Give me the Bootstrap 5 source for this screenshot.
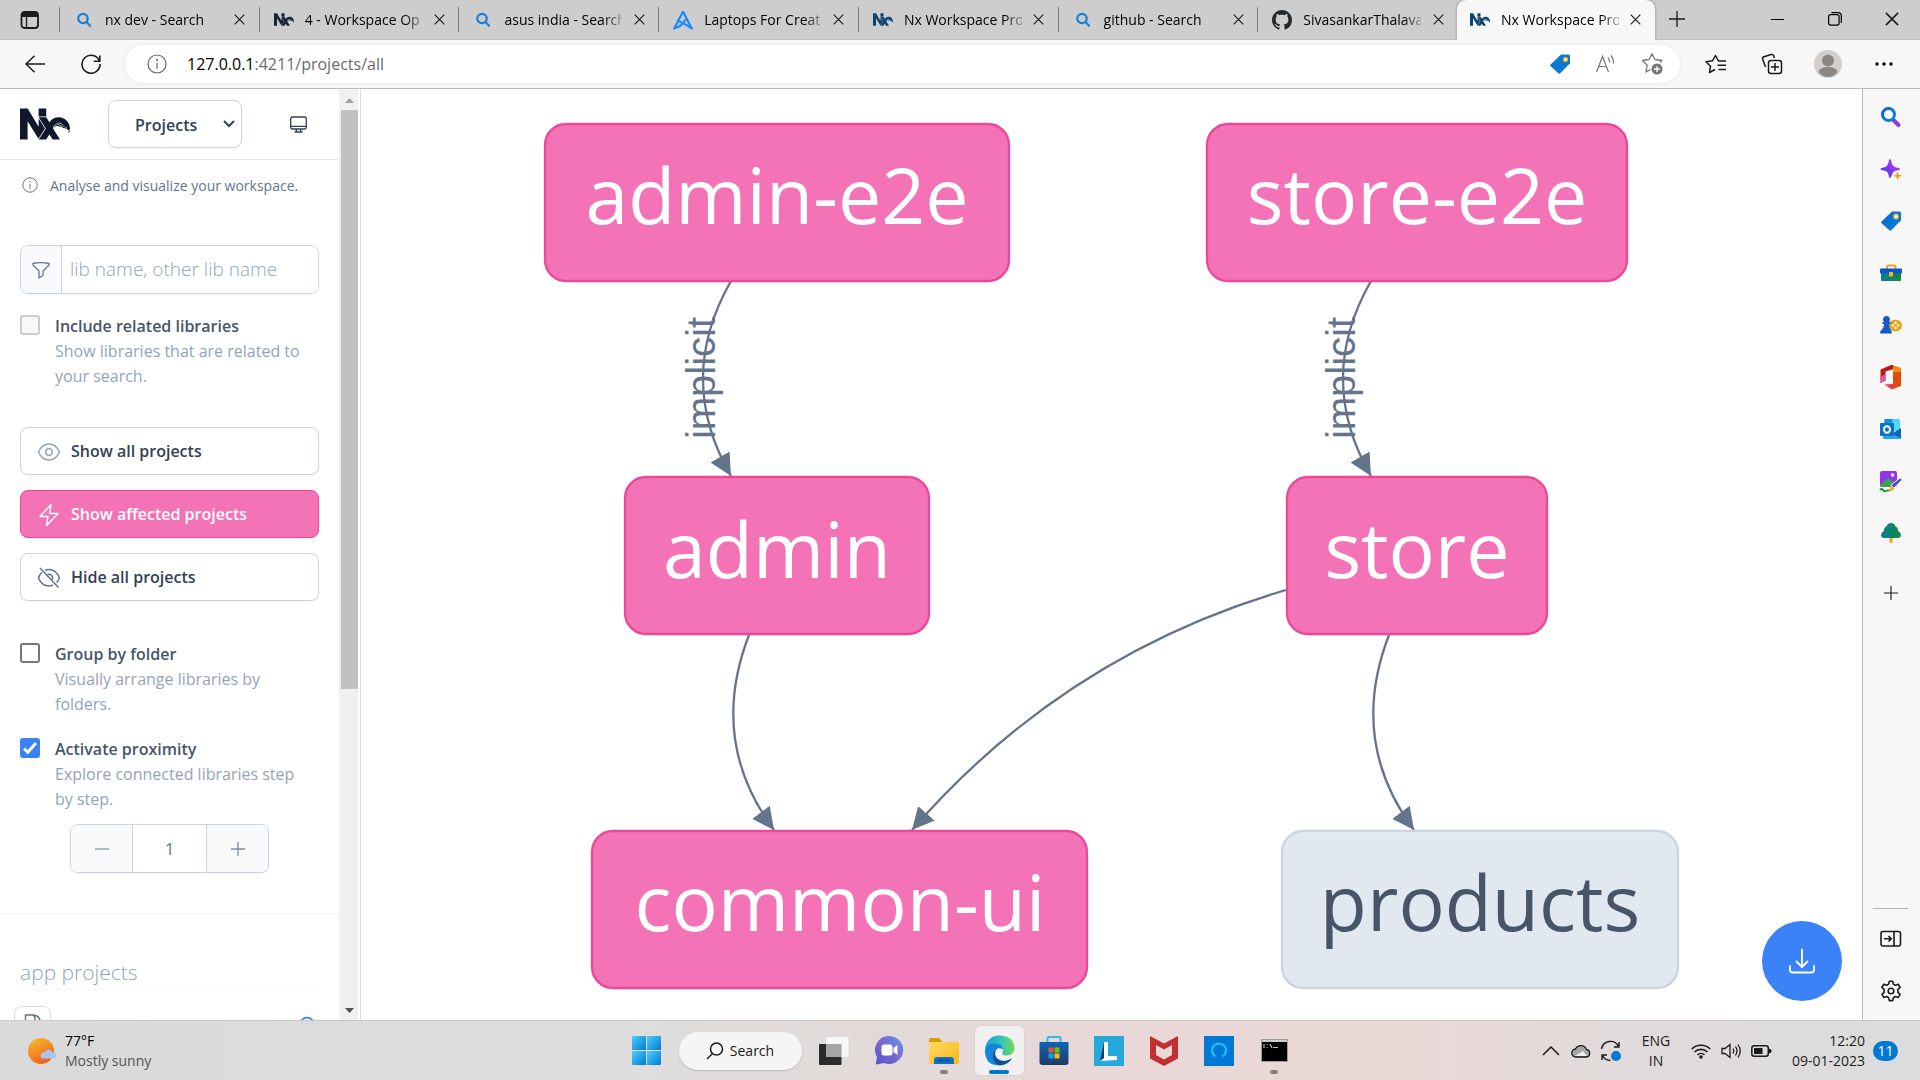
<!DOCTYPE html>
<html lang="en">
<head>
<meta charset="utf-8">
<meta name="viewport" content="width=device-width, initial-scale=1">
<title>Nx Workspace Project Graph</title>
<link href="https://cdn.jsdelivr.net/npm/bootstrap@5.3.0/dist/css/bootstrap.min.css" rel="stylesheet">
<style>
  :root { --slate-300:#cbd5e1; --slate-400:#94a3b8; --slate-500:#64748b; --slate-600:#475569; --slate-700:#334155; }
  body { font-family:"Open Sans","Noto Sans",sans-serif; font-size:16px; line-height:25px; color:var(--slate-600); overflow:hidden; }
  svg { display:block; flex:none; }
  .bare { border:0; background:none; padding:0; display:flex; align-items:center; justify-content:center; color:#1b1b1b; flex:none; }

  /* tab strip */
  .tabstrip { height:40px; background:#cdcdcd; color:#000; font-size:14px; line-height:20px; border-bottom:1px solid #c0c0c0; }
  .tab-tools { width:59px; }
  .tab-strip-list { min-width:0; }
  .tab-item { min-width:0; position:relative; padding:0 8px 0 14px; border-left:1px solid #7d7d7d; height:25px; margin-top:7px; }
  .tab-item.current { background:#f7f7f7; border-left:0; border-radius:9px 9px 0 0; height:40px; margin-top:0; box-shadow:0 0 3px rgba(0,0,0,.35); clip-path:inset(0 -4px 0 -4px); padding-left:13px; padding-bottom:1px; }
  .tab-name { color:#000; text-decoration:none; white-space:nowrap; flex:1; min-width:0; margin-left:11px; -webkit-mask-image:linear-gradient(90deg,#000 100px,transparent 124px); mask-image:linear-gradient(90deg,#000 100px,transparent 124px); }
  .tab-close { width:22px; height:22px; margin-left:6px; }
  .win-tools { width:265px; }
  .win-tools .bare { width:57px; height:38px; }
  .win-tools .bare:first-child { width:44px; margin-right:auto; }

  /* toolbar */
  .toolbar { height:49px; background:#f7f7f7; border-bottom:1px solid #bbb; padding:5px 8px 5px 7px; }
  .toolbar > .bare { width:56px; height:38px; }
  .address { background:#fff; border-radius:19px; height:38px; box-shadow:0 0 4px rgba(0,0,0,.08); margin:0 8px 0 6px; padding:0 5px 0 22px; }
  .address-text { font-size:16px; color:#6b6b6b; margin-left:20px; }
  .address-text b { font-weight:400; color:#000; }
  .address .bare { width:46px; height:38px; color:#767676; }

  /* left panel */
  .panel { width:361px; border-right:1px solid #ddd; background:#fff; }
  .panel-body { min-width:0; overflow:hidden; }
  .panel-head { height:71px; padding:0 20px; border-bottom:1px solid #e2e4e8; }
  .view-select { width:134px; height:48px; margin-left:38px; border:1px solid var(--slate-300); border-radius:8px; padding:2px 36px 0 26px; font-size:16px; font-weight:600; color:var(--slate-700); box-shadow:0 1px 2px rgba(0,0,0,.05);
    background-image:url("data:image/svg+xml,%3Csvg xmlns='http://www.w3.org/2000/svg' viewBox='0 0 12 12' fill='none' stroke='%23334155' stroke-width='2'%3E%3Cpath d='M1 3l5 5 5-5'/%3E%3C/svg%3E"); background-position:right 6px center; background-size:12px; }
  .intro { padding:0 22px; height:50px; font-size:14px; color:var(--slate-500); }
  .section-x { padding:0 20px; }
  .filter { height:49px; margin-top:35px; border:1px solid var(--slate-300); border-radius:8px; overflow:hidden; box-shadow:0 1px 2px rgba(0,0,0,.05); }
  .filter label { width:41px; flex:none; background:#f8fafc; border-right:1px solid var(--slate-300); color:var(--slate-500); }
  .filter input { border:0; padding:0 8px; font-size:19px; font-weight:300; border-radius:0; }
  .filter input::placeholder { color:var(--slate-400); }
  .option { padding-left:35px; min-height:0; margin:0; }
  .option .form-check-input { width:20px; height:20px; margin:1px 0 0 -35px; border:2px solid #767676; border-radius:3px; opacity:1; }
  .option .form-check-input:disabled { border-color:#ccc; background:#f8f8f8; }
  .option .form-check-input:checked { background-color:#3b82f6; border-color:#3b82f6; background-size:20px; background-image:url("data:image/svg+xml,%3Csvg xmlns='http://www.w3.org/2000/svg' viewBox='0 0 20 20' fill='none' stroke='%23fff' stroke-width='3'%3E%3Cpath d='M4 10.500l3.800 3.800L16 5'/%3E%3C/svg%3E"); }
  .option label { font-weight:600; color:var(--slate-600); display:block; opacity:1!important; }
  .option p { margin:0; padding-right:12px; color:var(--slate-400); }
  .opt-first { margin-top:20px; }
  .actions { margin-top:38px; gap:15px; }
  .act { height:48px; text-align:left; border:1px solid var(--slate-300); border-radius:8px; background:#fff; color:var(--slate-700); font-size:16px; font-weight:600; padding:1px 16px 0; display:flex; align-items:center; gap:10px; box-shadow:0 1px 2px rgba(0,0,0,.05); }
  .act svg { color:var(--slate-400); }
  .act.affected { background:#f472b6; border-color:#ec4899; color:#fff; }
  .act.affected svg { color:#fff; }
  .opt-mid { margin-top:41px; }
  .opt-next { margin-top:20px; }
  .stepper { width:199px; height:49px; margin:12px 0 0 50px; border:1px solid var(--slate-300); border-radius:8px; overflow:hidden; box-shadow:0 1px 2px rgba(0,0,0,.05); }
  .stepper button { width:61px; background:#f8fafc; color:var(--slate-400); }
  .stepper input { width:75px; border:solid var(--slate-300); border-width:0 1px; text-align:center; color:var(--slate-500); font-size:17px; padding:0; }
  .project-list { margin-top:40px; border-top:1px solid #f1f5f9; padding-top:44px; }
  .project-list h2 { font-size:21px; font-weight:300; line-height:28px; color:var(--slate-400); padding-bottom:3px; margin-bottom:16px; border-bottom:1px solid #f8fafc; }
  .file-chip { width:37px; height:37px; margin-left:-6px; border:1px solid #d5dce6; border-radius:8px; color:var(--slate-500); box-shadow:0 1px 2px rgba(0,0,0,.05); }
  .rail { width:19px; background:#f0f0f0; padding:8px 0 6px 2px; margin-right:2px; }
  .rail-track { flex:1; margin:6px 0; }
  .rail-thumb { width:17px; height:65%; background:#c1c1c1; }

  /* graph */
  .graph { position:relative; flex:1; min-width:0; background:#fff; overflow:hidden; }
  .graph > svg { width:100%; height:100%; }
  .graph-node { font-family:"Open Sans","Noto Sans",sans-serif; font-size:77px; text-anchor:middle; fill:#fff; }
  .fab { position:absolute; right:20px; bottom:19px; width:80px; height:80px; border-radius:50%; background:#3b82f6; color:#fff; }

  /* browser side bar */
  .edgebar { width:58px; background:#f7f7f7; border-left:1px solid #bbb; padding:2px 2px 3px 0; }
  .edgebar .bare { width:55px; height:52px; }
  .edgebar .bare:nth-child(n+4) { margin-top:0; }
  .edgebar hr { width:35px; margin:auto 0 4px; border-color:#8a8a8a; opacity:.6; }

  /* task bar */
  .taskbar { height:60px; display:grid; grid-template-columns:1fr auto 1fr; color:#1c1c1c; font-size:14px; line-height:20px; border-top:1px solid #c9c9c9;
    background:linear-gradient(90deg,#dadada 0,#dedddd 32%,#e2dad9 46%,#e9d8d7 58%,#ead8d7 74%,#e0dbda 84%,#dcdcdc 100%); }
  .task { width:55px; height:59px; position:relative; }
  .task::before { content:""; position:absolute; inset:5px 3px; border-radius:5px; }
  .task svg { position:relative; }
  .task.active::before { background:#f1efef; box-shadow:0 0 1px #aaa; }
  .task.open::after { content:""; position:absolute; bottom:6px; width:8px; height:4px; border-radius:2px; background:#888180; }
  .task.active::after { width:20px; background:#0078d4; }
  .task-search { width:123px; height:38px; margin:0 5px; border-radius:19px; background:#f5f5f5; box-shadow:0 1px 2px rgba(0,0,0,.15); gap:6px; }
  .weather-note { color:#555; }
  .tray { gap:2px; padding-right:22px; }
  .tray .icon-slot { width:28px; height:40px; display:flex; align-items:center; justify-content:center; }
  .tray-lang { width:58px; text-align:center; }
  .tray-clock { width:88px; text-align:right; }
  .tray-count { width:25px; height:20px; border-radius:10px; background:#0078d4; color:#fff; margin-left:6px; text-align:center; }
</style>
</head>
<body class="vh-100 d-flex flex-column">
<svg width="0" height="0" class="position-absolute" aria-hidden="true">
  <defs>
    <symbol id="nx" viewBox="0 4.4 24 15.2"><path fill="currentColor" d="m11.987 14.138-3.132 4.923-5.193-8.427-.012 8.822H0V4.544h3.691l5.247 8.833.005-3.998 3.044 4.759zm.601-5.761c.024-.048 0-3.784.008-3.833h-3.65c.002.059-.005 3.776-.003 3.833h3.645zm5.634 4.134a2.061 2.061 0 0 0-1.969 1.336 1.963 1.963 0 0 1 2.343-.739c.396.161.917.422 1.33.283a2.1 2.1 0 0 0-1.704-.88zm3.39 1.061c-.375-.13-.8-.277-1.109-.681-.06-.08-.116-.17-.176-.265a2.143 2.143 0 0 0-.533-.642c-.294-.216-.68-.322-1.18-.322a2.482 2.482 0 0 0-2.294 1.536 2.325 2.325 0 0 1 4.002.388.75.75 0 0 0 .836.334c.493-.105.46.36 1.203.518v-.133c-.003-.446-.246-.55-.75-.733zm2.024 1.266a.723.723 0 0 0 .347-.638c-.01-2.957-2.41-5.487-5.37-5.487a5.364 5.364 0 0 0-4.487 2.418c-.01-.026-1.522-2.39-1.538-2.418H8.943l3.463 5.423-3.379 5.32h3.54l1.54-2.366 1.568 2.366h3.541l-3.21-5.052a.7.7 0 0 1-.084-.32 2.69 2.69 0 0 1 2.69-2.691h.001c1.488 0 1.736.89 2.057 1.308.634.826 1.9.464 1.9 1.541a.707.707 0 0 0 1.066.596zm.35.133c-.173.372-.56.338-.755.639-.176.271.114.412.114.412s.337.156.538-.311c.104-.231.14-.488.103-.74z"/></symbol>
    <symbol id="lens" viewBox="0 0 20 20"><g fill="none" stroke="#1a7fd6" stroke-width="2.2" stroke-linecap="round"><circle cx="9" cy="8.500" r="4.700"/><path d="M12.500 12l3.500 3.800"/></g></symbol>
    <symbol id="x" viewBox="0 0 11 11"><path d="M.7.7l9.600 9.600M10.300.7L.7 10.300" fill="none" stroke="currentColor" stroke-width="1.200"/></symbol>
    <symbol id="plus" viewBox="0 0 18 18"><path d="M9 1v16M1 9h16" fill="none" stroke="currentColor" stroke-width="1.300"/></symbol>
    <symbol id="info" viewBox="0 0 20 20"><g fill="none" stroke="currentColor" stroke-width="1.200"><circle cx="10" cy="10" r="9"/><path d="M10 8.700v6"/></g><circle cx="10" cy="6" r="1" fill="currentColor"/></symbol>
    <linearGradient id="gBlue" x1="0" y1="0" x2="1" y2="1"><stop stop-color="#0a5fd8"/><stop offset="1" stop-color="#0a8ad0"/></linearGradient>
    <linearGradient id="gPurple" x1="0" y1="1" x2="1" y2="0"><stop stop-color="#3f35f5"/><stop offset="1" stop-color="#c13cf0"/></linearGradient>
    <linearGradient id="gGreen" x1="0" y1="0" x2="1" y2="0"><stop stop-color="#087d96"/><stop offset="1" stop-color="#118a3c"/></linearGradient>
    <linearGradient id="gWin" x1="0" y1="0" x2="1" y2="1"><stop stop-color="#4fd0fb"/><stop offset="1" stop-color="#0078d4"/></linearGradient>
    <linearGradient id="gSun" x1="0" y1="0" x2="0.500" y2="1"><stop stop-color="#f6bf2c"/><stop offset="1" stop-color="#f0641e"/></linearGradient>
    <linearGradient id="gFold" x1="0" y1="0" x2="1" y2="1"><stop stop-color="#ffd964"/><stop offset="1" stop-color="#fbb813"/></linearGradient>
    <linearGradient id="gEdge" x1="0" y1="0" x2="1" y2="0"><stop stop-color="#1b9de2"/><stop offset=".55" stop-color="#33c4bd"/><stop offset="1" stop-color="#6fe04a"/></linearGradient>
    <linearGradient id="gChat" x1="0" y1="1" x2="1" y2="0"><stop stop-color="#5652c9"/><stop offset=".6" stop-color="#7b6fd0"/><stop offset="1" stop-color="#5b9bf0"/></linearGradient>
    <linearGradient id="gStore" x1="0" y1="0" x2="0" y2="1"><stop stop-color="#0b67b8"/><stop offset="1" stop-color="#213a66"/></linearGradient>
    <marker id="tip" viewBox="0 0 22 22" refX="22" refY="11" markerWidth="22" markerHeight="22" markerUnits="userSpaceOnUse" orient="auto"><path d="M0 0L22 11L0 22z" fill="#64748b"/></marker>
  </defs>
</svg>

<header>
  <div class="tabstrip d-flex">
    <button class="bare tab-tools" aria-label="Tab actions"><svg width="20" height="20" viewBox="0 0 20 20"><rect x="1.500" y="2" width="16.500" height="16" rx="3" fill="none" stroke="#1b1b1b" stroke-width="1.800"/><path d="M2 3h16v4H2z" fill="#1b1b1b"/><path d="M6.500 6v12" stroke="#1b1b1b" stroke-width="1.300"/></svg></button>
    <nav class="tab-strip-list d-flex flex-fill" aria-label="Tabs">
      <div class="tab-item flex-fill w-100 d-flex align-items-center"><svg width="20" height="20"><use href="#lens"/></svg><a class="tab-name" href="#">nx dev - Search</a><button class="bare tab-close" aria-label="Close tab"><svg width="11" height="11"><use href="#x"/></svg></button></div>
      <div class="tab-item flex-fill w-100 d-flex align-items-center"><svg width="20" height="13" color="#1a2238"><use href="#nx"/></svg><a class="tab-name" href="#">4 - Workspace Op</a><button class="bare tab-close" aria-label="Close tab"><svg width="11" height="11"><use href="#x"/></svg></button></div>
      <div class="tab-item flex-fill w-100 d-flex align-items-center"><svg width="20" height="20"><use href="#lens"/></svg><a class="tab-name" href="#">asus india - Search</a><button class="bare tab-close" aria-label="Close tab"><svg width="11" height="11"><use href="#x"/></svg></button></div>
      <div class="tab-item flex-fill w-100 d-flex align-items-center"><svg width="20" height="20" viewBox="0 0 20 20"><path d="M10 1.500L1.200 18.500Q9 16.500 12.500 9.500M10 1.500l8.800 17Q13 14 5.500 11" fill="none" stroke="#1e88ff" stroke-width="2.200" stroke-linejoin="round"/></svg><a class="tab-name" href="#">Laptops For Creat</a><button class="bare tab-close" aria-label="Close tab"><svg width="11" height="11"><use href="#x"/></svg></button></div>
      <div class="tab-item flex-fill w-100 d-flex align-items-center"><svg width="20" height="13" color="#0d4470"><use href="#nx"/></svg><a class="tab-name" href="#">Nx Workspace Pro</a><button class="bare tab-close" aria-label="Close tab"><svg width="11" height="11"><use href="#x"/></svg></button></div>
      <div class="tab-item flex-fill w-100 d-flex align-items-center"><svg width="20" height="20"><use href="#lens"/></svg><a class="tab-name" href="#">github - Search</a><button class="bare tab-close" aria-label="Close tab"><svg width="11" height="11"><use href="#x"/></svg></button></div>
      <div class="tab-item flex-fill w-100 d-flex align-items-center"><svg width="20" height="20" viewBox="0 0 16 16"><path fill="#24292f" d="M8 0C3.580 0 0 3.580 0 8c0 3.540 2.290 6.530 5.470 7.590.4.070.55-.17.55-.38 0-.19-.01-.82-.01-1.490-2.010.37-2.530-.49-2.690-.94-.09-.23-.48-.94-.82-1.130-.28-.15-.68-.52-.01-.53.63-.01 1.080.58 1.230.82.72 1.210 1.870.87 2.330.66.070-.52.28-.87.51-1.070-1.780-.2-3.640-.89-3.640-3.950 0-.87.31-1.590.82-2.150-.08-.2-.36-1.020.08-2.120 0 0 .67-.21 2.200.82.64-.18 1.320-.27 2-.27s1.360.09 2 .27c1.530-1.040 2.200-.82 2.200-.82.44 1.100.16 1.920.08 2.120.51.56.82 1.270.82 2.150 0 3.070-1.870 3.750-3.650 3.950.29.25.54.73.54 1.480 0 1.070-.01 1.930-.01 2.200 0 .21.15.46.55.38A8.010 8.010 0 0 0 16 8c0-4.420-3.580-8-8-8z"/></svg><a class="tab-name" href="#">SivasankarThalava</a><button class="bare tab-close" aria-label="Close tab"><svg width="11" height="11"><use href="#x"/></svg></button></div>
      <div class="tab-item current flex-fill w-100 d-flex align-items-center"><svg width="20" height="13" color="#0d4470"><use href="#nx"/></svg><a class="tab-name" href="#" aria-current="page">Nx Workspace Pro</a><button class="bare tab-close" aria-label="Close tab"><svg width="11" height="11"><use href="#x"/></svg></button></div>
    </nav>
    <div class="win-tools d-flex flex-shrink-0">
      <button class="bare" aria-label="New tab"><svg width="18" height="18"><use href="#plus"/></svg></button>
      <button class="bare" aria-label="Minimize"><svg width="13" height="13"><path d="M0 6.500h13" stroke="#000"/></svg></button>
      <button class="bare" aria-label="Restore"><svg width="14" height="14" fill="none" stroke="#000" stroke-width="1.200"><rect x=".6" y="2.600" width="10.500" height="10.500" rx="2"/><path d="M3.500.6H10a3.300 3.300 0 0 1 3.300 3.300V11"/></svg></button>
      <button class="bare" aria-label="Close window"><svg width="14" height="14"><use href="#x"/></svg></button>
    </div>
  </div>

  <div class="toolbar d-flex align-items-center">
    <button class="bare" aria-label="Back"><svg width="20" height="18" fill="none" stroke="#1b1b1b" stroke-width="1.500"><path d="M20 9H1M9.500.8L1 9l8.500 8.200"/></svg></button>
    <button class="bare" aria-label="Refresh"><svg width="20" height="20" fill="none" stroke="#1b1b1b" stroke-width="1.600"><path d="M18.500 7.300A9 9 0 1 0 19 10M18.800 1.500v5.800h-6"/></svg></button>
    <div class="address d-flex align-items-center flex-fill">
      <svg width="20" height="20" color="#666"><use href="#info"/></svg>
      <a class="address-text flex-fill text-decoration-none" href="#"><b>127.0.0.1</b>:4211/projects/all</a>
      <button class="bare" aria-label="Shopping"><svg width="22" height="22"><path d="M12 1.500h7.500a1.500 1.500 0 0 1 1.500 1.500v7.300L11 20.500Q10.300 21 9.700 20.500L1.300 13Q.8 12.300 1.300 11.700z" fill="#0a78d4"/><circle cx="16.500" cy="6.500" r="2" fill="#fff" stroke="#e9ac1c" stroke-width="1.300"/></svg></button>
      <button class="bare" aria-label="Read aloud"><svg width="22" height="20" fill="none" stroke="currentColor" stroke-width="1.200"><path d="M1.500 18L7.500 2.500 13.500 18M3.500 12.500h8M13 3.500a7 7 0 0 1 1.500 5M16 1.500a11 11 0 0 1 2.500 8"/></svg></button>
      <button class="bare" aria-label="Add to favorites"><svg width="22" height="22"><path d="M19 9.500l2-2-7-1L11 .9 8 6.500l-6.500 1 4.700 4.800L5 19l4.500-2.500" fill="none" stroke="currentColor" stroke-width="1.300" stroke-linejoin="round"/><circle cx="16" cy="16" r="5.500" fill="currentColor"/><path d="M16 13v6M13 16h6" stroke="#fff" stroke-width="1.300"/></svg></button>
    </div>
    <button class="bare" aria-label="Favorites"><svg width="22" height="20" fill="none" stroke="#1b1b1b" stroke-width="1.500" stroke-linejoin="round"><path d="M21 7h-7.500L10.500 1.500 7.500 6.800l-6.500 1 4.500 4.400L4.500 18.500l5.500-3M12.500 11.300H21M13.500 15.500H21"/></svg></button>
    <button class="bare" aria-label="Collections"><svg width="22" height="22" fill="none" stroke="#1b1b1b" stroke-width="1.500"><rect x="7.500" y="7.500" width="13" height="13" rx="2.500"/><path d="M14 10v8M10 14h8M4.500 14L1.700 6.500Q1 4.500 3 3.800L10 1.500Q12 1 12.700 2.700L13.300 5"/></svg></button>
    <button class="bare" aria-label="Profile"><svg width="28" height="28"><circle cx="14" cy="14" r="14" fill="#d2cfcc"/><circle cx="14" cy="10.500" r="6" fill="#8b8682"/><path d="M4.500 22a9.500 5 0 0 1 19 0Q20 27 14 27T4.500 22z" fill="#8b8682"/></svg></button>
    <button class="bare" aria-label="Settings and more"><svg width="18" height="4"><circle cx="2" cy="2" r="1.700"/><circle cx="9" cy="2" r="1.700"/><circle cx="16" cy="2" r="1.700"/></svg></button>
  </div>
</header>

<div class="d-flex flex-fill overflow-hidden">
  <aside class="panel d-flex flex-shrink-0">
    <div class="panel-body flex-fill">
      <div class="panel-head d-flex align-items-center">
        <svg width="50" height="32" color="#0f172a" role="img" aria-label="Nx"><use href="#nx"/></svg>
        <select class="form-select view-select" aria-label="View"><option>Projects</option><option>Tasks</option></select>
        <button class="bare ms-auto me-2 pe-1" aria-label="Theme"><svg width="17" height="17" fill="none" stroke="#334155" stroke-width="1.300"><rect x=".7" y="1" width="15.600" height="12" rx="1.500"/><path d="M1 10.300h15M6.300 13v3M10.700 13v3M4.500 16h8"/></svg></button>
      </div>
      <div class="intro d-flex align-items-center"><svg width="16" height="16" class="me-2"><use href="#info"/></svg><span class="ms-1">Analyse and visualize your workspace.</span></div>
      <div class="section-x">
        <div class="filter d-flex">
          <label for="q" class="d-flex align-items-center justify-content-center"><svg width="18" height="18" viewBox="0 0 18 18" fill="none" stroke="currentColor" stroke-width="1.300" stroke-linejoin="round"><path d="M1 2.500Q9 .8 17 2.500V4L11 10v4.500l-4 2.500v-7L1 4z"/></svg></label>
          <input id="q" class="form-control shadow-none" type="text" placeholder="lib name, other lib name">
        </div>
        <div class="form-check option opt-first"><input class="form-check-input" type="checkbox" id="c1" disabled><label for="c1">Include related libraries</label><p>Show libraries that are related to your search.</p></div>
        <div class="actions d-flex flex-column">
          <button class="act"><svg width="24" height="20" fill="none" stroke="currentColor" stroke-width="1.500"><path d="M1.500 10Q5 2 12 2t10.500 8Q19 18 12 18T1.500 10z"/><circle cx="12" cy="10" r="3.300"/></svg>Show all projects</button>
          <button class="act affected"><svg width="24" height="24" fill="none" stroke="currentColor" stroke-width="1.500" stroke-linejoin="round"><path d="M14 1.500L3 13.500h8L9.500 22.500 21 10.500h-8.500z"/></svg>Show affected projects</button>
          <button class="act"><svg width="24" height="22" fill="none" stroke="#64748b" stroke-width="1.500"><path d="M3 1l18.500 19.500M8 3.200Q10 2.500 12 2.500 19 2.500 22.500 11q-1 2.700-3 4.600M16 18q-2 1-4 1Q5 19 1.500 11 2.500 7.500 5 5.200M10.500 7.800a3.500 3.500 0 0 1 4.700 4.700"/></svg>Hide all projects</button>
        </div>
        <div class="form-check option opt-mid"><input class="form-check-input" type="checkbox" id="c2"><label for="c2">Group by folder</label><p>Visually arrange libraries by folders.</p></div>
        <div class="form-check option opt-next"><input class="form-check-input" type="checkbox" id="c3" checked><label for="c3">Activate proximity</label><p>Explore connected libraries step by step.</p></div>
        <div class="stepper d-flex">
          <button class="bare" aria-label="Decrease"><svg width="14" height="14"><path d="M0 7h14" stroke="currentColor" stroke-width="1.500"/></svg></button>
          <input type="text" value="1" aria-label="Proximity">
          <button class="bare" aria-label="Increase"><svg width="14" height="14"><path d="M0 7h14M7 0v14" stroke="#7c8ba1" stroke-width="1.300"/></svg></button>
        </div>
      </div>
      <div class="project-list section-x">
        <h2>app projects</h2>
        <div class="d-flex justify-content-between align-items-center">
          <button class="bare file-chip" aria-label="Focus project"><svg width="20" height="22" fill="none" stroke="currentColor" stroke-width="1.500"><path d="M2.500 1h7q7.500 0 8 8v12h-15zM9.500 1q2.500.5 2.500 4t5 3.500"/></svg></button>
          <svg width="16" height="18" class="me-1" fill="none" stroke="#3b82f6" stroke-width="1.600"><circle cx="8" cy="8.800" r="7.200"/></svg>
        </div>
      </div>
    </div>
    <div class="rail d-flex flex-column flex-shrink-0">
      <svg width="17" height="7"><path d="M4 6l4.500-5L13 6z" fill="#a3a3a3"/></svg>
      <div class="rail-track"><div class="rail-thumb"></div></div>
      <svg width="17" height="7"><path d="M4 1l4.500 5L13 1z" fill="#505050"/></svg>
    </div>
  </aside>

  <main class="graph">
    <svg viewBox="361 89 1501 931" preserveAspectRatio="xMidYMid meet">
      <g fill="none" stroke="#64748b" stroke-width="2.300">
        <path d="M731 281Q675 379 731 476" marker-end="url(#tip)"/>
        <path d="M1371 281Q1315 379 1371 476" marker-end="url(#tip)"/>
        <path d="M749 635Q708 741 774 830" marker-end="url(#tip)"/>
        <path d="M1389 635Q1348 741 1414 830" marker-end="url(#tip)"/>
        <path d="M1286 590Q1064 655 912 830" marker-end="url(#tip)"/>
      </g>
      <g font-family="Liberation Sans, sans-serif" font-size="40" fill="#64748b" text-anchor="middle">
        <text transform="translate(715 378) rotate(-90)">implicit</text>
        <text transform="translate(1355 378) rotate(-90)">implicit</text>
      </g>
      <g fill="#f472b6" stroke="#ec4899" stroke-width="2.300">
        <rect x="545" y="124" width="464" height="157" rx="21"/>
        <rect x="1207" y="124" width="420" height="157" rx="21"/>
        <rect x="625" y="477" width="304" height="157" rx="21"/>
        <rect x="1287" y="477" width="260" height="157" rx="21"/>
        <rect x="592" y="831" width="495" height="157" rx="21"/>
        <rect x="1282" y="831" width="396" height="157" rx="21" fill="#e2e8f0" stroke="#cbd5e1"/>
      </g>
      <g class="graph-node">
        <text x="777" y="224">admin-e2e</text>
        <text x="1417" y="224">store-e2e</text>
        <text x="777" y="578">admin</text>
        <text x="1417" y="578">store</text>
        <text x="840" y="931">common-ui</text>
        <text x="1480" y="931" fill="#475569">products</text>
      </g>
    </svg>
    <button class="bare fab" aria-label="Save graph"><svg width="26" height="26" fill="none" stroke="currentColor" stroke-width="1.800" stroke-linecap="round" stroke-linejoin="round"><path d="M13 1.500v17M7.500 13.500l5.500 5.500 5.500-5.500M1 18v4q0 2.500 2.500 2.500h19q2.500 0 2.500-2.500v-4"/></svg></button>
  </main>

  <aside class="edgebar d-flex flex-column align-items-center flex-shrink-0">
    <button class="bare" aria-label="Search"><svg width="22" height="22"><path d="M13.500 14l5 5" stroke="#8a3fe8" stroke-width="4" stroke-linecap="round"/><circle cx="8.500" cy="8.500" r="6" fill="#fff" stroke="url(#gBlue)" stroke-width="3"/></svg></button>
    <button class="bare" aria-label="Discover"><svg width="22" height="22"><path d="M10 1q1 0 1.500 3.500 1 4 4.500 5 4 .5 4 1.500t-3.500 1.500-4.500 4Q11 20 10 20t-1.500-3.500q-1-3.500-4.500-4T.5 11 4 9.500q3.500-1 4.500-5Q9 1 10 1z" fill="url(#gPurple)"/><path d="M17.500 13.500l1.200 3 3.300 1.200-3.300 1.200-1.200 3-1.200-3-3-1.200 3-1.200z" fill="#eaa815"/></svg></button>
    <button class="bare" aria-label="Shopping"><svg width="22" height="22"><path d="M12 1.500h7.500a1.500 1.500 0 0 1 1.500 1.500v7.300L11 20.500Q10.300 21 9.700 20.500L1.300 13Q.8 12.300 1.300 11.700z" fill="url(#gBlue)"/><circle cx="16" cy="6.500" r="2.200" fill="#fff" stroke="#eeb422" stroke-width="1.400"/></svg></button>
    <button class="bare" aria-label="Tools"><svg width="22" height="20"><path d="M7 6V4q0-1.500 1.500-1.500h5.500Q15.500 2.500 15.500 4v2" fill="none" stroke="#eaa815" stroke-width="2"/><path d="M1 8h20v9q0 1-1 1H2q-1 0-1-1z" fill="url(#gGreen)"/><rect y="5.500" width="22" height="5" rx="1" fill="#0b55cf"/><rect x="9" y="9" width="4" height="4.500" fill="#f4b41b"/></svg></button>
    <button class="bare" aria-label="Games"><svg width="22" height="20"><ellipse cx="15.500" cy="10.500" rx="6.500" ry="6" fill="#e8a516"/><g fill="#fff"><circle cx="15.500" cy="8" r="1.200"/><circle cx="15.500" cy="13" r="1.200"/><circle cx="13" cy="10.500" r="1.200"/><circle cx="18" cy="10.500" r="1.200"/></g><path d="M6.500 1a3.500 3.500 0 0 1 2.500 6h1.500v2H9q0 4 2.500 7l.5 2.500H0L.5 16Q4 13 4 9H2.500V7H4a3.500 3.500 0 0 1 2.500-6z" fill="#1459c8"/></svg></button>
    <button class="bare" aria-label="Office"><svg width="22" height="24"><path d="M11 0L.5 4.500V18l5-2.500V6.500L13 4.300V0z" fill="#b71c1c"/><path d="M.5 12v6l5-2.500V9z" fill="#e0559c"/><path d="M4.500 19.500L13 19v5h-2z" fill="#e53950"/><path d="M13 .6V24l8-3V3.200z" fill="#e04a0c"/><path d="M13 .6v7l8-1V3.200z" fill="#f08a1b"/></svg></button>
    <button class="bare" aria-label="Outlook"><svg width="22" height="20"><rect x="4.500" width="15.500" height="12" rx="1" fill="#50d9ff"/><path d="M4.500 0h8v10h-8z" fill="#1490df"/><path d="M3 10l9 5 9-6v10q0 1-1 1H4q-1 0-1-1z" fill="#1fa8ea"/><path d="M12 15l9-6v10z" fill="#1066b5"/><rect y="4" width="14" height="13" rx="1" fill="#0a72cc"/><ellipse cx="7" cy="10.500" rx="3" ry="3.300" fill="none" stroke="#fff" stroke-width="1.900"/></svg></button>
    <button class="bare" aria-label="Image creator"><svg width="24" height="23"><rect x="1" y="1" width="17" height="16" rx="2" fill="#9333ea"/><path d="M1 15l8-7 9 7q0 2-2 2H3q-2 0-2-2z" fill="#34a853"/><circle cx="13.500" cy="5" r="1.800" fill="#fff"/><path d="M21 8q2 0 2 2l-8 8-3-3z" fill="#4a48ef" stroke="#f7f7f7"/><path d="M12 15l3.500 3.500Q13 22 10 21z" fill="#f2ab22"/><path d="M1 20q2-2 3 0t3 1 3 0" stroke="#159147" stroke-width="1.800" fill="none"/></svg></button>
    <button class="bare" aria-label="Drop"><svg width="22" height="22"><path d="M9.500 15h3v5q0 1-1.500 1t-1.500-1z" fill="#f1a51b"/><path d="M11 1q3.500 0 4.500 3.500Q18.500 6 18 9q3 1.500 3 4 0 3-3.500 3H4.500Q1 16 1 13q0-2.500 3-4Q3.500 6 6.500 4.500 7.500 1 11 1z" fill="url(#gGreen)"/></svg></button>
    <button class="bare mt-2" aria-label="Customize"><svg width="16" height="16"><use href="#plus"/></svg></button>
    <hr>
    <button class="bare" aria-label="Hide sidebar"><svg width="22" height="18" fill="none" stroke="#1b1b1b" stroke-width="1.600"><rect x="1" y="1.500" width="19.500" height="14.500" rx="2"/><path d="M14 1.500V16M4 8.700h7M8.500 6l2.700 2.700L8.500 11.500"/></svg></button>
    <button class="bare" aria-label="Settings"><svg width="22" height="22" viewBox="0 0 22 22" fill="none" stroke="#1b1b1b" stroke-width="1.600" stroke-linejoin="round"><circle cx="11" cy="11" r="2.800"/><path d="M9.300 1.200h3.400l.7 2.900 1.900 1.100 2.900-.9 1.900 3-2.200 2.100v2.900l2.200 2.100-1.900 3-2.900-.9-1.900 1.200-.7 2.900H9.300l-.7-2.900-1.900-1.200-2.900.9-1.900-3 2.200-2.100V9.400L1.900 7.300l1.900-3 2.900.9 1.900-1.100z"/></svg></button>
  </aside>
</div>

<footer class="taskbar align-items-center">
  <div class="d-flex align-items-center ps-4 gap-2">
    <svg width="33" height="30" viewBox="-1 0 33 30"><circle cx="16" cy="15" r="13" fill="url(#gSun)"/><path d="M17 22.500a4 4 0 0 1 0-6q1-.6 2.500-.5a4.500 4.500 0 0 1 8 .5q4 0 4 3t-3 3z" fill="#a9c5f4"/></svg>
    <div><div class="text-black">77°F</div><div class="weather-note">Mostly sunny</div></div>
  </div>
  <div class="d-flex align-items-center">
    <button class="bare task" aria-label="Start"><svg width="29" height="29" fill="url(#gWin)"><path d="M0 1q0-1 1-1h13v14H0z"/><path d="M15 0h13q1 0 1 1v13H15z"/><path d="M0 15h14v14H1q-1 0-1-1z"/><path d="M15 15h14v13q0 1-1 1H15z"/></svg></button>
    <button class="bare task-search"><svg width="18" height="18" fill="none" stroke="#1b1b1b" stroke-width="1.500"><circle cx="10.500" cy="7" r="6"/><path d="M6.500 11.500L1 17"/></svg>Search</button>
    <button class="bare task" aria-label="Task view"><svg width="30" height="28"><rect y="7" width="22.500" height="21" rx="1" fill="#2b2b2b"/><rect x="7" width="22.500" height="20" rx="1" fill="#fafafa" opacity=".9"/><path d="M7 7h15.500v13H7z" fill="#a5a5a5"/></svg></button>
    <button class="bare task" aria-label="Chat"><svg width="29" height="29"><path d="M14.500 0A14 14 0 1 1 9 27L1.500 28.500Q.5 28.500 1 27L2 21A14 14 0 0 1 14.500 0z" fill="url(#gChat)"/><rect x="6.500" y="8.500" width="11" height="11" rx="2.500" fill="#fff"/><path d="M18.500 12l4-3v10l-4-3z" fill="#fff"/></svg></button>
    <button class="bare task open" aria-label="File Explorer"><svg width="30" height="28"><path d="M0 3q0-2 2-2h8l3 3v4H0z" fill="#dc9b0b"/><path d="M0 5h28q2 0 2 2v18q0 2-2 2H2q-2 0-2-2z" fill="url(#gFold)"/><path d="M5 27v-4q0-3 3-3h14q3 0 3 3v4z" fill="#0f6fc6"/><path d="M9 23.500h12" stroke="#0a4c92" stroke-width="1.500"/></svg></button>
    <button class="bare task open active" aria-label="Edge"><svg width="31" height="31" viewBox="0 0 31 31"><path d="M1 14Q3 .5 16 .5 30 1.500 30.500 13q0 7-7.500 7.500-6 0-4.500-3.500 1.500-3-1-5.500Q10 7 1 14z" fill="url(#gEdge)"/><path d="M.8 16Q2 9 10 8.500q8-.5 9 6-6-3.500-8 2.500-1 8 6 13Q2 32 .8 16z" fill="#1583d8"/><path d="M11.500 15q-2 8 5.500 10.500 6 1.500 11-2.500-3.500 7-12 7.500-8-3-7-10 .5-4 2.500-5.500z" fill="#0c4f9e"/></svg></button>
    <button class="bare task" aria-label="Store"><svg width="30" height="30"><path d="M8.500 8V2.500q0-1.500 1.500-1.500h10q1.500 0 1.500 1.500V8" fill="none" stroke="#2dbbef" stroke-width="2"/><path d="M.5 6h29v20q0 3-3 3h-23q-3 0-3-3z" fill="url(#gStore)"/><path d="M9.500 11.500h5v5h-5z" fill="#f25022"/><path d="M15.500 11.500h5v5h-5z" fill="#7fba00"/><path d="M9.500 17.500h5v5h-5z" fill="#00a4ef"/><path d="M15.500 17.500h5v5h-5z" fill="#ffb900"/></svg></button>
    <button class="bare task" aria-label="Lenovo Vantage"><svg width="30" height="30"><path d="M0 0h30v30H0z" fill="#25aadb"/><path d="M6 25l4-19v18z" fill="#0c3f70"/><path d="M10 6h4v14h9v4L6 25l4-3z" fill="#fff"/></svg></button>
    <button class="bare task" aria-label="McAfee"><svg width="28" height="30"><path d="M0 0l14 7.500L28 0v22.500L14 30 0 22.500zM6 9v10l8 4.500 8-4.500V9l-8 4.500z" fill="#c32f31" fill-rule="evenodd"/></svg></button>
    <button class="bare task" aria-label="Assistant"><svg width="30" height="30"><path d="M0 0h30v30H0z" fill="#0078d7"/><path d="M11.500 20.500a7 7 0 1 1 7 0" fill="none" stroke="#11cfff" stroke-width="2"/></svg></button>
    <button class="bare task open" aria-label="Terminal"><svg width="27" height="23"><rect x=".5" y=".5" width="26" height="22" fill="#000" stroke="#9d9d9d"/><path d="M1 2h25" stroke="#ccc" stroke-width="2"/><path d="M3 5v4M6 5v.8M6 8v.8M9 5l2 4M12 8.500h5" stroke="#bbb" stroke-width="1.200"/></svg></button>
  </div>
  <div class="tray d-flex align-items-center justify-content-end">
    <span class="icon-slot"><svg width="18" height="10" fill="none" stroke="#1b1b1b" stroke-width="1.500"><path d="M1 9l8-8 8 8"/></svg></span>
    <span class="icon-slot"><svg width="20" height="14"><path d="M5 13a4 4 0 0 1-.5-8 6 6 0 0 1 11 .5A3.800 3.800 0 0 1 15.500 13z" fill="#a5a5a5" stroke="#1b1b1b" stroke-width="1.300"/><path d="M4 12l8-5 4 5z" fill="#eee"/></svg></span>
    <span class="icon-slot"><svg width="22" height="22"><g fill="none" stroke="#1b1b1b" stroke-width="1.400"><path d="M1.500 9a9 9 0 0 1 17-2.500M19 2v5h-5M2 20v-5h5M2.500 15.500a9 9 0 0 0 8 5"/></g><circle cx="16" cy="16" r="5" fill="#0078d4"/></svg></span>
    <span class="tray-lang">ENG<br>IN</span>
    <span class="icon-slot"><svg width="20" height="16" fill="none" stroke="#1b1b1b" stroke-width="1.600"><path d="M.7 6a13.500 13.500 0 0 1 18.600 0M3.500 9a9.300 9.300 0 0 1 13 0M6.500 11.800a5.200 5.200 0 0 1 7 0"/><circle cx="10" cy="14" r="1" fill="#1b1b1b"/></svg></span>
    <span class="icon-slot"><svg width="20" height="16" fill="none" stroke="#1b1b1b" stroke-width="1.300"><path d="M1 5.500h3l5-4v13l-5-4H1zM12 5.500q1.500 2.500 0 5M14.500 3.500q3 4.500 0 9M17 1.500q4.500 6.500 0 13"/></svg></span>
    <span class="icon-slot"><svg width="21" height="12"><rect x=".8" y=".8" width="16.500" height="10.400" rx="2.500" fill="none" stroke="#1b1b1b" stroke-width="1.500"/><rect x="3" y="3" width="8.500" height="6" fill="#1b1b1b"/><path d="M18 4l2 1v2l-2 1z" fill="#1b1b1b" stroke="#1b1b1b"/></svg></span>
    <span class="tray-clock">12:20<br>09-01-2023</span>
    <span class="tray-count">11</span>
  </div>
</footer>
<script src="https://cdn.jsdelivr.net/npm/bootstrap@5.3.0/dist/js/bootstrap.bundle.min.js"></script>
</body>
</html>
